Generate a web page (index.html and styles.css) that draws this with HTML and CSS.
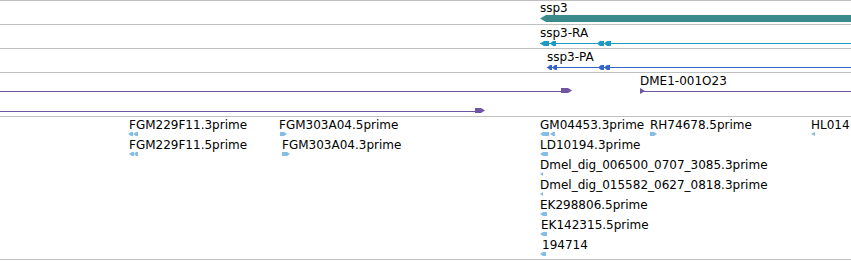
FILE: index.html
```html
<!DOCTYPE html>
<html lang="en">
<head>
  <meta charset="UTF-8">
  <title>ssp3 region</title>
  <link rel="stylesheet" href="styles.css">
</head>
<body>
  <div class="panel">

    <!-- gene -->
    <div class="track track--gene">
      <svg class="lane" width="851" height="23">
        <text class="label" x="540" y="11">ssp3</text>
        <polygon class="gene" points="540,17.5 546,14 851,14 851,21 546,21"/>
      </svg>
    </div>

    <!-- transcript -->
    <div class="track track--transcript">
      <svg class="lane" width="851" height="23">
        <text class="label" x="540" y="12">ssp3-RA</text>
        <rect class="mrna" x="540" y="18" width="311" height="1"/>
        <polygon class="mrna" points="540,18.5 544,16 549,16 549,21 544,21"/>
        <polygon class="mrna" points="550,18.5 553,16 556,16 556,21 553,21"/>
        <polygon class="mrna" points="597,18.5 600,16 604,16 604,21 600,21"/>
        <polygon class="mrna" points="604,18.5 607,16 611,16 611,21 607,21"/>
      </svg>
    </div>

    <!-- protein -->
    <div class="track track--protein">
      <svg class="lane" width="851" height="23">
        <text class="label" x="547" y="12">ssp3-PA</text>
        <rect class="cds" x="547" y="18" width="304" height="1"/>
        <polygon class="cds" points="547,18.5 550,16 552,16 552,21 550,21"/>
        <polygon class="cds" points="552,18.5 555,16 557,16 557,21 555,21"/>
        <polygon class="cds" points="598,18.5 601,16 604,16 604,21 601,21"/>
        <polygon class="cds" points="604,18.5 607,16 610,16 610,21 607,21"/>
      </svg>
    </div>

    <!-- clones -->
    <div class="track track--clone">
      <svg class="lane" width="851" height="43">
        <rect class="clone" x="0" y="18" width="562" height="1"/>
        <polygon class="clone" points="561,15 568,15 572,17.5 568,20 561,20"/>
        <text class="label" x="640" y="12">DME1-001O23</text>
        <rect class="clone" x="640" y="18" width="211" height="1"/>
        <polygon class="clone" points="640,15 645,18 640,21"/>
        <rect class="clone" x="0" y="38" width="476" height="1"/>
        <polygon class="clone" points="475,35 481,35 485,37.5 481,40 475,40"/>
      </svg>
    </div>

    <!-- ESTs -->
    <div class="track track--est">
      <svg class="lane" width="851" height="20">
        <text class="label" x="129" y="12">FGM229F11.3prime</text>
        <polygon class="est" points="128,17 131,15 133,15 133,19 131,19"/>
        <polygon class="est" points="133,17 136,15 138,15 138,19 136,19"/>
        <text class="label" x="279" y="12">FGM303A04.5prime</text>
        <polygon class="est" points="280,15 284,15 287,17 284,19 280,19"/>
        <text class="label" x="540" y="12">GM04453.3prime</text>
        <polygon class="est" points="540,17 543,15 549,15 549,19 543,19"/>
        <polygon class="est" points="550,17 553,15 555,15 555,19 553,19"/>
        <text class="label" x="650" y="12">RH74678.5prime</text>
        <polygon class="est" points="650,15 654,15 657,17 654,19 650,19"/>
        <text class="label" x="811" y="12">HL014</text>
        <polygon class="est" points="811,17 815,15 815,19"/>
      </svg>
      <svg class="lane" width="851" height="20">
        <text class="label" x="129" y="12">FGM229F11.5prime</text>
        <polygon class="est" points="129,17 132,15 134,15 134,19 132,19"/>
        <polygon class="est" points="134,17 136,15 138,15 138,19 136,19"/>
        <text class="label" x="282" y="12">FGM303A04.3prime</text>
        <polygon class="est" points="282,15 287,15 290,17 287,19 282,19"/>
        <text class="label" x="540" y="12">LD10194.3prime</text>
        <polygon class="est" points="540,17 543,15 548,15 548,19 543,19"/>
      </svg>
      <svg class="lane" width="851" height="20">
        <text class="label" x="540" y="12">Dmel_dig_006500_0707_3085.3prime</text>
        <polygon class="est" points="540,17 543,15 543,19"/>
      </svg>
      <svg class="lane" width="851" height="20">
        <text class="label" x="540" y="12">Dmel_dig_015582_0627_0818.3prime</text>
        <polygon class="est" points="540,17 543,15 543,19"/>
      </svg>
      <svg class="lane" width="851" height="20">
        <text class="label" x="540" y="12">EK298806.5prime</text>
        <polygon class="est" points="540,17 543,15 547,15 547,19 543,19"/>
      </svg>
      <svg class="lane" width="851" height="20">
        <text class="label" x="541" y="12">EK142315.5prime</text>
        <polygon class="est" points="540,17 543,15 547,15 547,19 543,19"/>
      </svg>
      <svg class="lane" width="851" height="20">
        <text class="label" x="542" y="12">194714</text>
        <polygon class="est" points="540,17 543,15 546,15 546,19 543,19"/>
      </svg>
    </div>

  </div>
</body>
</html>
```

FILE: styles.css
```css
body {
  margin: 0;
  padding: 0;
  background: #ffffff;
  overflow: hidden;
}

.panel {
  width: 851px;
  border-top: 1px solid #c0c0c0;
  font-family: "DejaVu Sans", sans-serif;
  font-size: 12px;
}

.track {
  display: flex;
  flex-direction: column;
  border-bottom: 1px solid #c0c0c0;
}

.track--gene,
.track--transcript,
.track--protein {
  height: 23px;
}

.track--clone {
  height: 43px;
}

.track--est {
  height: 142px;
}

.lane {
  display: block;
  flex: none;
}

.label {
  fill: #000000;
  font-family: "DejaVu Sans", sans-serif;
  font-size: 12px;
}

.gene {
  fill: #3d8a8c;
}

.mrna {
  fill: #1c9ac2;
}

.cds {
  fill: #3465c9;
}

.clone {
  fill: #6f55a3;
}

.est {
  fill: #86bde3;
}
```
